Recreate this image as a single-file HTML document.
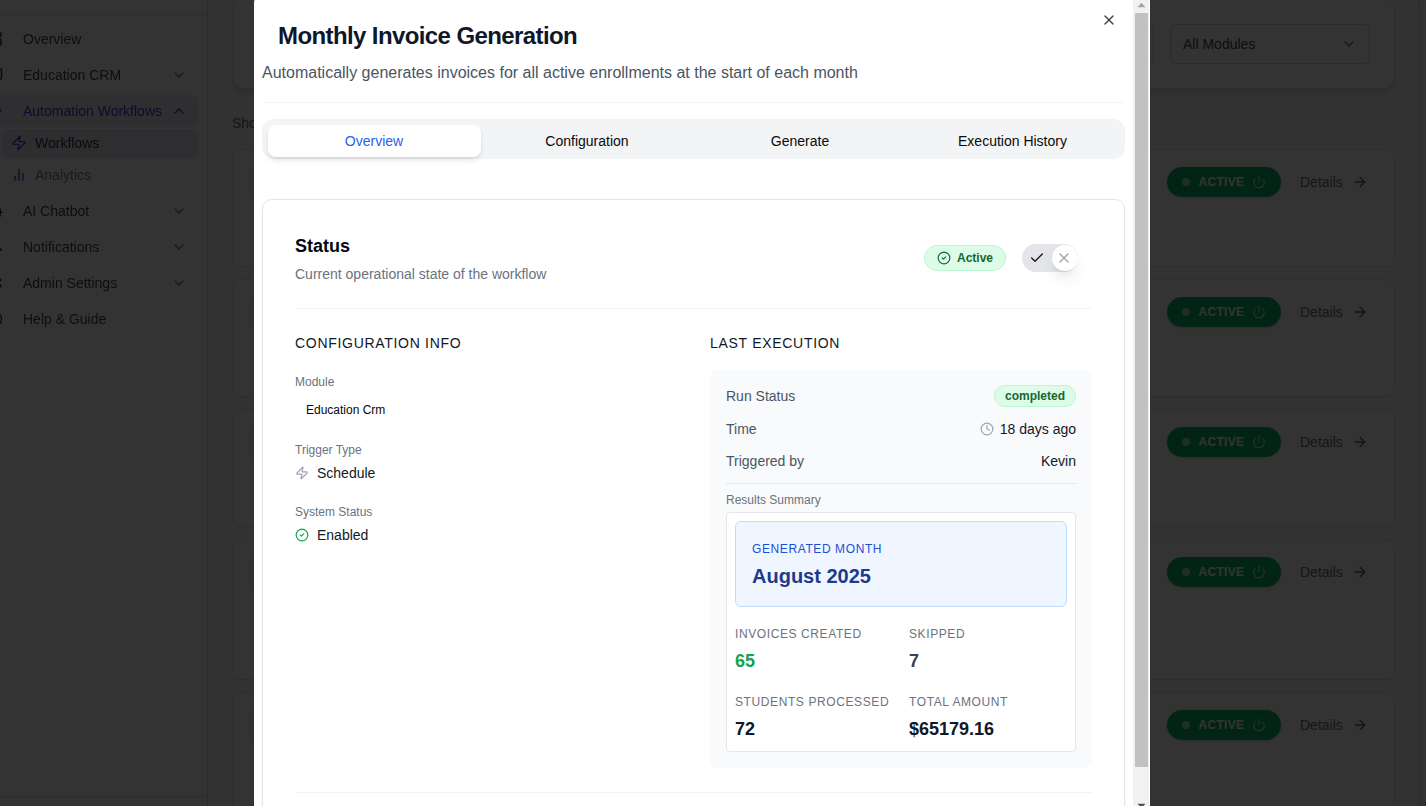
<!DOCTYPE html>
<html lang="en">
<head>
<meta charset="utf-8">
<title>Monthly Invoice Generation</title>
<style>
*{box-sizing:border-box;margin:0;padding:0}
html,body{width:1426px;height:806px;overflow:hidden;background:#fff}
body{font-family:"Liberation Sans",Arial,sans-serif;color:#0a0a0a;position:relative;font-size:14px;line-height:20px}
.abs{position:absolute}
.t{position:absolute;white-space:nowrap}
svg{position:absolute;overflow:visible}
/* ---------- background page ---------- */
#page{position:absolute;left:0;top:0;width:1426px;height:806px;background:#f9fafb;overflow:hidden}
#side{position:absolute;left:-48px;top:0;width:255px;height:806px;background:#fff}
#side .hd{position:absolute;left:0;top:0;width:255px;height:15px;border-bottom:1px solid #dadde2}
.nav{will-change:transform;position:absolute;left:71px;font-size:14px;line-height:20px;color:#414856;white-space:nowrap}
.chev{left:221px;width:12px;height:12px}
.wcard{position:absolute;left:232px;width:1163px;background:#fff;border:1px solid #e0e3e8;border-radius:8px;box-shadow:0 1px 2px rgba(0,0,0,.04)}
.pill{position:absolute;left:1167px;width:114px;height:30px;border-radius:15px;background:#0bb463;box-shadow:0 1px 3px rgba(0,0,0,.15)}
.pill .d{position:absolute;left:15px;top:11px;width:8px;height:8px;border-radius:50%;background:#9aeab8}
.pill .x{position:absolute;left:31.5px;top:5px;font-size:12px;line-height:20px;font-weight:700;letter-spacing:.3px;color:#fff}
.det{position:absolute;left:1300px;font-size:14px;line-height:20px;color:#6b7280}
#ov{position:absolute;left:0;top:0;width:1426px;height:806px;background:rgba(0,0,0,.8)}
/* ---------- modal ---------- */
#modal{position:absolute;left:254px;top:-5px;width:896px;height:820px;background:#fff;border-radius:8px 3px 3px 8px;overflow:hidden}
#m{position:absolute;left:-254px;top:5px;width:1426px;height:806px}
.g6{color:#4b5563}.g5{color:#6b7280}
.s12{font-size:12px;line-height:16px}
.s14{font-size:14px;line-height:20px}
.b{font-weight:700}
.up{letter-spacing:.6px}
</style>
</head>
<body>
<div id="page">
  <div id="side">
    <div class="hd"></div>
    <div class="abs" style="left:0;top:796px;width:255px;height:1px;background:#dadde2"></div>
    <div class="abs" style="left:40px;top:95px;width:207px;height:32px;border-radius:8px;background:#e8e5f5"></div>
    <div class="abs" style="left:49px;top:129px;width:198px;height:29px;border-radius:8px;background:#e7e7ed"></div>
    <svg style="left:35px;top:31px" width="16" height="16" viewBox="0 0 24 24" fill="none" stroke="#1f2937" stroke-width="2" stroke-linecap="round" stroke-linejoin="round"><rect width="7" height="9" x="3" y="3" rx="1"/><rect width="7" height="5" x="14" y="3" rx="1"/><rect width="7" height="9" x="14" y="12" rx="1"/><rect width="7" height="5" x="3" y="16" rx="1"/></svg>
    <svg style="left:59px;top:135px" width="16" height="16" viewBox="0 0 24 24" fill="none" stroke="#6d28d9" stroke-width="2" stroke-linecap="round" stroke-linejoin="round"><path d="M4 14a1 1 0 0 1-.78-1.63l9.9-10.2a.5.5 0 0 1 .86.46l-1.92 6.02A1 1 0 0 0 13 10h7a1 1 0 0 1 .78 1.63l-9.9 10.2a.5.5 0 0 1-.86-.46l1.92-6.02A1 1 0 0 0 11 14z"/></svg>
    <svg style="left:59px;top:167px" width="16" height="16" viewBox="0 0 24 24" fill="none" stroke="#6d28d9" stroke-width="2" stroke-linecap="round" stroke-linejoin="round"><path d="M18 20V10"/><path d="M12 20V4"/><path d="M6 20v-6"/></svg>
    <svg style="left:219px;top:67px" width="16" height="16" viewBox="0 0 24 24" fill="none" stroke="#6b7280" stroke-width="2" stroke-linecap="round" stroke-linejoin="round"><path d="m6 9 6 6 6-6"/></svg>
    <svg style="left:219px;top:103px" width="16" height="16" viewBox="0 0 24 24" fill="none" stroke="#6d28d9" stroke-width="2" stroke-linecap="round" stroke-linejoin="round"><path d="m18 15-6-6-6 6"/></svg>
    <svg style="left:219px;top:203px" width="16" height="16" viewBox="0 0 24 24" fill="none" stroke="#6b7280" stroke-width="2" stroke-linecap="round" stroke-linejoin="round"><path d="m6 9 6 6 6-6"/></svg>
    <svg style="left:219px;top:239px" width="16" height="16" viewBox="0 0 24 24" fill="none" stroke="#6b7280" stroke-width="2" stroke-linecap="round" stroke-linejoin="round"><path d="m6 9 6 6 6-6"/></svg>
    <svg style="left:219px;top:275px" width="16" height="16" viewBox="0 0 24 24" fill="none" stroke="#6b7280" stroke-width="2" stroke-linecap="round" stroke-linejoin="round"><path d="m6 9 6 6 6-6"/></svg>
    <svg style="left:48px;top:0" width="8" height="340" viewBox="0 0 8 340" fill="none" stroke="#1f2937" stroke-width="1.33" stroke-linecap="round" stroke-linejoin="round"><path d="M-3 68.8H0.4a1.1 1.1 0 0 1 1.1 1.1V77.9a1.1 1.1 0 0 1-1.1 1.1H-3"/><circle cx="0.1" cy="110.5" r="1.3" fill="#6d28d9" stroke="none"/><path d="M0.2 208.8V216M0.2 212.4H2"/><path d="M-1 247.9C0.4 248.5 1 249.4 1.1 250.2H-1"/><circle cx="0" cy="280" r="1.5" fill="#1f2937" stroke="none"/><circle cx="0" cy="285.8" r="1.6" fill="#1f2937" stroke="none"/><circle cx="-5.1" cy="319" r="6.67"/></svg>
    <div class="nav" style="top:29px">Overview</div>
    <div class="nav" style="top:65px">Education CRM</div>
    <div class="nav" style="top:101px;color:#6d28d9">Automation Workflows</div>
    <div class="nav" style="top:133px;left:83px;color:#2c313c">Workflows</div>
    <div class="nav" style="top:165px;left:83px;color:#7b8290">Analytics</div>
    <div class="nav" style="top:201px">AI Chatbot</div>
    <div class="nav" style="top:237px">Notifications</div>
    <div class="nav" style="top:273px">Admin Settings</div>
    <div class="nav" style="top:309px">Help &amp; Guide</div>
  </div>
  <div class="wcard" style="top:-2px;height:91px;border-radius:12px;box-shadow:0 4px 6px -1px rgba(0,0,0,.1),0 2px 4px -2px rgba(0,0,0,.1)"></div>
  <div class="abs" style="left:954px;top:24px;width:200px;height:40px;border:1px solid #d1d5db;border-radius:6px;background:#fff"></div>
  <div class="abs" style="left:1170px;top:24px;width:200px;height:40px;border:1px solid #d1d5db;border-radius:6px;background:#fff"></div>
  <div class="t s14" style="left:1183px;top:34px;color:#414856">All Modules</div>
  <svg style="left:1341px;top:36px" width="16" height="16" viewBox="0 0 24 24" fill="none" stroke="#6b7280" stroke-width="2" stroke-linecap="round" stroke-linejoin="round"><path d="m6 9 6 6 6-6"/></svg>
  <div class="t s14" style="left:232px;top:113px;color:#6b7280">Showing</div>
  <div class="wcard" style="top:149px;height:118px"></div>
  <div class="wcard" style="top:279px;height:118px"></div>
  <div class="wcard" style="top:409px;height:118px"></div>
  <div class="wcard" style="top:539px;height:141px"></div>
  <div class="wcard" style="top:692px;height:141px"></div>
  <div class="abs" style="left:249px;top:165px;width:36px;height:36px;border-radius:8px;background:#f1f2f5;border:1px solid #e1e3e8"></div>
  <div class="abs" style="left:249px;top:295px;width:36px;height:36px;border-radius:8px;background:#f1f2f5;border:1px solid #e1e3e8"></div>
  <div class="abs" style="left:249px;top:425px;width:36px;height:36px;border-radius:8px;background:#f1f2f5;border:1px solid #e1e3e8"></div>
  <div class="abs" style="left:249px;top:555px;width:36px;height:36px;border-radius:8px;background:#f1f2f5;border:1px solid #e1e3e8"></div>
  <div class="abs" style="left:249px;top:708px;width:36px;height:36px;border-radius:8px;background:#f1f2f5;border:1px solid #e1e3e8"></div>
  <div class="pill" style="top:167px"><i class="d"></i><span class="x">ACTIVE</span><svg style="left:85px;top:8px" width="14" height="14" viewBox="0 0 24 24" fill="none" opacity=".8" stroke="#fff" stroke-width="2" stroke-linecap="round" stroke-linejoin="round"><path d="M12 2v10"/><path d="M18.4 6.6a9 9 0 1 1-12.77.04"/></svg></div><div class="det" style="top:172px">Details</div><svg style="left:1352px;top:174px" width="16" height="16" viewBox="0 0 24 24" fill="none" stroke="#596273" stroke-width="2" stroke-linecap="round" stroke-linejoin="round"><path d="M5 12h14"/><path d="m12 5 7 7-7 7"/></svg>
  <div class="pill" style="top:297px"><i class="d"></i><span class="x">ACTIVE</span><svg style="left:85px;top:8px" width="14" height="14" viewBox="0 0 24 24" fill="none" opacity=".8" stroke="#fff" stroke-width="2" stroke-linecap="round" stroke-linejoin="round"><path d="M12 2v10"/><path d="M18.4 6.6a9 9 0 1 1-12.77.04"/></svg></div><div class="det" style="top:302px">Details</div><svg style="left:1352px;top:304px" width="16" height="16" viewBox="0 0 24 24" fill="none" stroke="#596273" stroke-width="2" stroke-linecap="round" stroke-linejoin="round"><path d="M5 12h14"/><path d="m12 5 7 7-7 7"/></svg>
  <div class="pill" style="top:427px"><i class="d"></i><span class="x">ACTIVE</span><svg style="left:85px;top:8px" width="14" height="14" viewBox="0 0 24 24" fill="none" opacity=".8" stroke="#fff" stroke-width="2" stroke-linecap="round" stroke-linejoin="round"><path d="M12 2v10"/><path d="M18.4 6.6a9 9 0 1 1-12.77.04"/></svg></div><div class="det" style="top:432px">Details</div><svg style="left:1352px;top:434px" width="16" height="16" viewBox="0 0 24 24" fill="none" stroke="#596273" stroke-width="2" stroke-linecap="round" stroke-linejoin="round"><path d="M5 12h14"/><path d="m12 5 7 7-7 7"/></svg>
  <div class="pill" style="top:557px"><i class="d"></i><span class="x">ACTIVE</span><svg style="left:85px;top:8px" width="14" height="14" viewBox="0 0 24 24" fill="none" opacity=".8" stroke="#fff" stroke-width="2" stroke-linecap="round" stroke-linejoin="round"><path d="M12 2v10"/><path d="M18.4 6.6a9 9 0 1 1-12.77.04"/></svg></div><div class="det" style="top:562px">Details</div><svg style="left:1352px;top:564px" width="16" height="16" viewBox="0 0 24 24" fill="none" stroke="#596273" stroke-width="2" stroke-linecap="round" stroke-linejoin="round"><path d="M5 12h14"/><path d="m12 5 7 7-7 7"/></svg>
  <div class="pill" style="top:710px"><i class="d"></i><span class="x">ACTIVE</span><svg style="left:85px;top:8px" width="14" height="14" viewBox="0 0 24 24" fill="none" opacity=".8" stroke="#fff" stroke-width="2" stroke-linecap="round" stroke-linejoin="round"><path d="M12 2v10"/><path d="M18.4 6.6a9 9 0 1 1-12.77.04"/></svg></div><div class="det" style="top:715px">Details</div><svg style="left:1352px;top:717px" width="16" height="16" viewBox="0 0 24 24" fill="none" stroke="#596273" stroke-width="2" stroke-linecap="round" stroke-linejoin="round"><path d="M5 12h14"/><path d="m12 5 7 7-7 7"/></svg>
  <div class="abs" style="left:207px;top:-4px;width:1213px;height:900px;border:1px solid #cfd3da;border-radius:8px"></div>
</div>
<div id="ov"></div>

<div id="modal"><div id="m">
  <!-- header -->
  <div class="t b" style="left:278px;top:20px;font-size:24px;line-height:32px;letter-spacing:-.6px;color:#0f172a">Monthly Invoice Generation</div>
  <div class="t g6" style="left:262px;top:61px;font-size:16px;line-height:24px">Automatically generates invoices for all active enrollments at the start of each month</div>
  <div class="abs" style="left:262px;top:102px;width:863px;height:1px;background:#f3f4f6"></div>
  <svg style="left:1101px;top:12px" width="16" height="16" viewBox="0 0 24 24" fill="none" stroke="#3f4540" stroke-width="2" stroke-linecap="round" stroke-linejoin="round"><path d="M18 6 6 18"/><path d="m6 6 12 12"/></svg>
  <!-- tabs -->
  <div class="abs" style="left:262px;top:119px;width:863px;height:40px;border-radius:12px;background:#f3f4f6"></div>
  <div class="abs" style="left:268px;top:125px;width:213px;height:32px;border-radius:8px;background:#fff;box-shadow:0 4px 6px -1px rgba(0,0,0,.1),0 2px 4px -2px rgba(0,0,0,.1)"></div>
  <div class="t s14" style="left:267.5px;top:131px;width:213px;text-align:center;color:#2563eb">Overview</div>
  <div class="t s14" style="left:480.5px;top:131px;width:213px;text-align:center">Configuration</div>
  <div class="t s14" style="left:693.5px;top:131px;width:213px;text-align:center">Generate</div>
  <div class="t s14" style="left:906px;top:131px;width:213px;text-align:center">Execution History</div>
  <!-- card -->
  <div class="abs" style="left:262px;top:199px;width:863px;height:700px;border:1px solid #e5e7eb;border-radius:10px;background:#fff;box-shadow:0 1px 3px rgba(0,0,0,.08),0 1px 2px -1px rgba(0,0,0,.08)"></div>
  <div class="t b" style="left:295px;top:232px;font-size:18px;line-height:28px;color:#030712">Status</div>
  <div class="t s14 g5" style="left:295px;top:264px">Current operational state of the workflow</div>
  <!-- active badge -->
  <div class="abs" style="left:924px;top:245px;width:82px;height:26px;border-radius:13px;background:#dcfce7;border:1px solid #bbf7d0"></div>
  <div class="t s12 b" style="left:957px;top:250px;color:#166534">Active</div>
  <svg style="left:937px;top:251px" width="14" height="14" viewBox="0 0 24 24" fill="none" stroke="#166534" stroke-width="2" stroke-linecap="round" stroke-linejoin="round"><circle cx="12" cy="12" r="10"/><path d="m9 12 2 2 4-4"/></svg>
  <!-- toggle -->
  <div class="abs" style="left:1022px;top:244px;width:56px;height:28px;border-radius:14px;background:#e4e5ea"></div>
  <div class="abs" style="left:1052px;top:245px;width:26px;height:26px;border-radius:13px;background:#fff;box-shadow:0 10px 15px -3px rgba(0,0,0,.1),0 4px 6px -4px rgba(0,0,0,.1)"></div>
  <svg style="left:1029px;top:250px" width="16" height="16" viewBox="0 0 24 24" fill="none" stroke="#171717" stroke-width="2" stroke-linecap="round" stroke-linejoin="round"><path d="M20 6 9 17l-5-5"/></svg>
  <svg style="left:1056px;top:250px" width="16" height="16" viewBox="0 0 24 24" fill="none" stroke="#9fa3a9" stroke-width="2" stroke-linecap="round" stroke-linejoin="round"><path d="M18 6 6 18"/><path d="m6 6 12 12"/></svg>
  <div class="abs" style="left:295px;top:308px;width:797px;height:1px;background:#f3f4f6"></div>
  <!-- config info -->
  <div class="t s14" style="left:295px;top:333px;letter-spacing:.7px;color:#111827">CONFIGURATION INFO</div>
  <div class="t s12 g5" style="left:295px;top:374px">Module</div>
  <div class="t s12" style="left:306px;top:402px;color:#0a0a0a">Education Crm</div>
  <div class="t s12 g5" style="left:295px;top:442px">Trigger Type</div>
  <div class="t s14" style="left:317px;top:463px;color:#111827">Schedule</div>
  <div class="t s12 g5" style="left:295px;top:504px">System Status</div>
  <div class="t s14" style="left:317px;top:525px;color:#111827">Enabled</div>
  <svg style="left:295px;top:466px" width="14" height="14" viewBox="0 0 24 24" fill="none" stroke="#9ca3af" stroke-width="2" stroke-linecap="round" stroke-linejoin="round"><path d="M4 14a1 1 0 0 1-.78-1.63l9.9-10.2a.5.5 0 0 1 .86.46l-1.92 6.02A1 1 0 0 0 13 10h7a1 1 0 0 1 .78 1.63l-9.9 10.2a.5.5 0 0 1-.86-.46l1.92-6.02A1 1 0 0 0 11 14z"/></svg>
  <svg style="left:295px;top:528px" width="14" height="14" viewBox="0 0 24 24" fill="none" stroke="#16a34a" stroke-width="2" stroke-linecap="round" stroke-linejoin="round"><circle cx="12" cy="12" r="10"/><path d="m9 12 2 2 4-4"/></svg>
  <!-- last execution -->
  <div class="t s14" style="left:710px;top:333px;letter-spacing:.7px;color:#111827">LAST EXECUTION</div>
  <div class="abs" style="left:710px;top:369.5px;width:382px;height:398.5px;border-radius:8px;background:#f9fafb"></div>
  <div class="t s14 g6" style="left:726px;top:386px">Run Status</div>
  <div class="abs" style="left:994px;top:385px;width:82px;height:22px;border-radius:11px;background:#dcfce7;border:1px solid #bbf7d0"></div>
  <div class="t s12 b" style="left:994px;top:388px;width:82px;text-align:center;color:#166534">completed</div>
  <div class="t s14 g6" style="left:726px;top:419px">Time</div>
  <div class="t s14" style="right:350px;top:419px;color:#111827">18 days ago</div>
  <svg style="left:980px;top:422px" width="14" height="14" viewBox="0 0 24 24" fill="none" stroke="#9ca3af" stroke-width="2" stroke-linecap="round" stroke-linejoin="round"><circle cx="12" cy="12" r="10"/><path d="M12 6v6l4 2"/></svg>
  <div class="t s14 g6" style="left:726px;top:451px">Triggered by</div>
  <div class="t s14" style="right:350px;top:451px;color:#111827">Kevin</div>
  <div class="abs" style="left:726px;top:483px;width:350px;height:1px;background:#e5e7eb"></div>
  <div class="t s12 g5" style="left:726px;top:492px">Results Summary</div>
  <div class="abs" style="left:726px;top:512px;width:350px;height:240px;border:1px solid #e5e7eb;border-radius:4px;background:#fff"></div>
  <div class="abs" style="left:735px;top:521px;width:332px;height:86px;border:1px solid #bfdbfe;border-radius:6px;background:#eff6ff"></div>
  <div class="t s12 up" style="left:752px;top:541px;color:#1d4ed8">GENERATED MONTH</div>
  <div class="t b" style="left:752px;top:562px;font-size:20px;line-height:28px;color:#1e3a8a">August 2025</div>
  <div class="t s12 up g5" style="left:735px;top:626px">INVOICES CREATED</div>
  <div class="t b" style="left:735px;top:647px;font-size:18px;line-height:28px;color:#16a34a">65</div>
  <div class="t s12 up g5" style="left:909px;top:626px">SKIPPED</div>
  <div class="t b" style="left:909px;top:647px;font-size:18px;line-height:28px;color:#374151">7</div>
  <div class="t s12 up g5" style="left:735px;top:694px">STUDENTS PROCESSED</div>
  <div class="t b" style="left:735px;top:715px;font-size:18px;line-height:28px;color:#111827">72</div>
  <div class="t s12 up g5" style="left:909px;top:694px">TOTAL AMOUNT</div>
  <div class="t b" style="left:909px;top:715px;font-size:18px;line-height:28px;color:#111827">$65179.16</div>
  <div class="abs" style="left:295px;top:792px;width:797px;height:1px;background:#f3f4f6"></div>
  <!-- scrollbar -->
  <div class="abs" style="left:1133px;top:-5px;width:16px;height:820px;background:#f1f1f1"></div>
  <div class="abs" style="left:1135px;top:13px;width:13px;height:754px;background:#c1c1c1"></div>
  <svg style="left:1137px;top:2px" width="9" height="6" viewBox="0 0 9 6"><path d="M0.5 5.2 L4.5 0.8 L8.5 5.2 Z" fill="#9aa8a8"/></svg>
  <svg style="left:1137px;top:803px" width="9" height="6" viewBox="0 0 9 6"><path d="M0.5 0.8 L4.5 5.2 L8.5 0.8 Z" fill="#505050"/></svg>
</div></div>
</body>
</html>
